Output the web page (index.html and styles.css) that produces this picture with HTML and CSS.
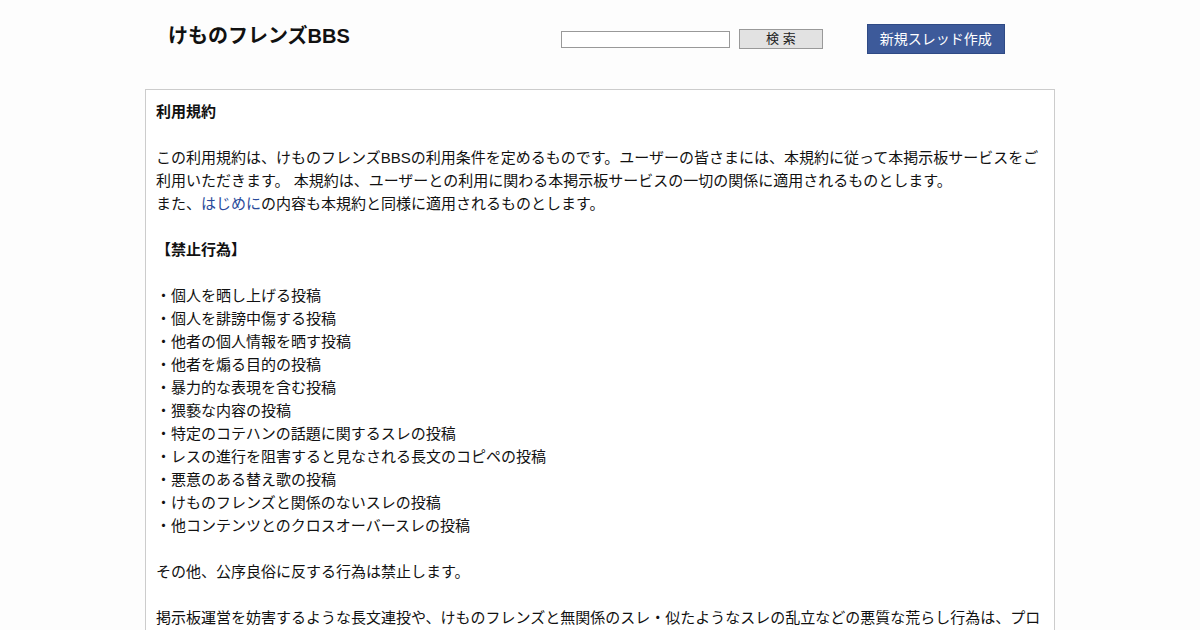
FILE: index.html
```html
<!DOCTYPE html>
<html lang="ja">
<head>
  <meta charset="UTF-8">
  <meta name="viewport" content="width=device-width, initial-scale=1.0">
  <title>けものフレンズBBS - 利用規約</title>
  <link rel="stylesheet" href="styles.css">
</head>
<body>
  <div class="wrapper">
    <header class="header">
      <h1 class="site-title">けものフレンズBBS</h1>
      <form class="search">
        <input type="text" class="search-input">
        <button type="button" class="search-btn">検 索</button>
      </form>
      <a href="#" class="new-thread">新規スレッド作成</a>
    </header>

    <div class="terms">
      <p><strong>利用規約</strong></p>
      <p>この利用規約は、けものフレンズBBSの利用条件を定めるものです。ユーザーの皆さまには、本規約に従って本掲示板サービスをご利用いただきます。 本規約は、ユーザーとの利用に関わる本掲示板サービスの一切の関係に適用されるものとします。<br>
      また、<a href="#">はじめに</a>の内容も本規約と同様に適用されるものとします。</p>
      <p><strong>【禁止行為】</strong></p>
      <p>
        ・個人を晒し上げる投稿<br>
        ・個人を誹謗中傷する投稿<br>
        ・他者の個人情報を晒す投稿<br>
        ・他者を煽る目的の投稿<br>
        ・暴力的な表現を含む投稿<br>
        ・猥褻な内容の投稿<br>
        ・特定のコテハンの話題に関するスレの投稿<br>
        ・レスの進行を阻害すると見なされる長文のコピペの投稿<br>
        ・悪意のある替え歌の投稿<br>
        ・けものフレンズと関係のないスレの投稿<br>
        ・他コンテンツとのクロスオーバースレの投稿
      </p>
      <p>その他、公序良俗に反する行為は禁止します。</p>
      <p>掲示板運営を妨害するような長文連投や、けものフレンズと無関係のスレ・似たようなスレの乱立などの悪質な荒らし行為は、プロバイダへの通報を行う場合があります。</p>
    </div>
  </div>
</body>
</html>
```

FILE: styles.css
```css
body {
  margin: 0;
  background-color: #fdfdfd;
  color: #111;
  font-family: "Liberation Sans", "Noto Sans CJK JP", sans-serif;
}
.wrapper {
  width: 910px;
  margin: 0 auto;
}
.header {
  display: flex;
  align-items: flex-start;
  padding-top: 24px;
  height: 65px;
}
.site-title {
  margin: 0 0 0 23px;
  font-size: 20px;
  line-height: 24px;
  font-weight: bold;
}
.search {
  display: flex;
  align-items: center;
  margin: 5px 0 0 211px;
  height: 20px;
}
.search-input {
  width: 167px;
  height: 15px;
  padding: 0;
  border: 1px solid #999;
  background: #fff;
}
.search-btn {
  width: 84px;
  height: 20px;
  margin-left: 9px;
  padding: 0;
  border: 1px solid #999;
  background-color: #e2e2e2;
  color: #222;
  font-family: "Liberation Sans", "Noto Sans CJK JP", sans-serif;
  font-size: 13px;
  line-height: 18px;
}
.new-thread {
  display: block;
  margin-left: 44px;
  width: 138px;
  height: 30px;
  box-sizing: border-box;
  background-color: #3d5a9a;
  border: 1px solid #2f4a85;
  color: #fff;
  text-align: center;
  font-size: 14px;
  line-height: 28px;
  text-decoration: none;
}
.terms {
  background-color: #fff;
  border: 1px solid #ccc;
  padding: 10px 10px;
  font-size: 15px;
  line-height: 23px;
  color: #111;
}
.terms p {
  margin: 0 0 23px;
}
.terms a {
  color: #2a4b9b;
  text-decoration: none;
}
```
